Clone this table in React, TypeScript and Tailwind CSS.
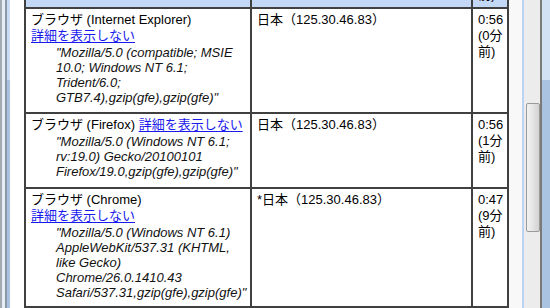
import React from "react";

type Row = {
  browser: string;
  inlineLink: boolean;
  ua: string[];
  place: string;
  time: string[];
  height: string;
};

const ROWS: Row[] = [
  {
    browser: "Internet Explorer",
    inlineLink: false,
    ua: [
      "\"Mozilla/5.0 (compatible; MSIE",
      "10.0; Windows NT 6.1;",
      "Trident/6.0;",
      "GTB7.4),gzip(gfe),gzip(gfe)\"",
    ],
    place: "日本（125.30.46.83）",
    time: ["0:56", "(0分", "前)"],
    height: "h-[105px]",
  },
  {
    browser: "Firefox",
    inlineLink: true,
    ua: [
      "\"Mozilla/5.0 (Windows NT 6.1;",
      "rv:19.0) Gecko/20100101",
      "Firefox/19.0,gzip(gfe),gzip(gfe)\"",
    ],
    place: "日本（125.30.46.83）",
    time: ["0:56", "(1分", "前)"],
    height: "h-[75px]",
  },
  {
    browser: "Chrome",
    inlineLink: false,
    ua: [
      "\"Mozilla/5.0 (Windows NT 6.1)",
      "AppleWebKit/537.31 (KHTML,",
      "like Gecko)",
      "Chrome/26.0.1410.43",
      "Safari/537.31,gzip(gfe),gzip(gfe)\"",
    ],
    place: "*日本（125.30.46.83）",
    time: ["0:47", "(9分", "前)"],
    height: "h-[119px]",
  },
];

const font = {
  fontFamily: '"Liberation Sans", Arial, "Noto Sans CJK JP", sans-serif',
};

const HideLink = () => (
  <a href="#" className="text-[#1a1aee] underline underline-offset-2">
    詳細を表示しない
  </a>
);

export default function App() {
  return (
    <div
      className="w-[550px] h-[308px] overflow-hidden flex bg-white text-[13px] text-black"
      style={font}
    >
      {/* window frame, left */}
      <div className="w-[2px] bg-[#a4aab2]" />
      <div className="w-[3px] bg-[#e6edf6]" />
      <div className="w-[2px] bg-[#8c98a6]" />
      <div className="w-[3px] flex flex-col">
        <div className="h-[80px] bg-[#c8dcf6]" />
        <div className="flex-1 bg-[#a9c2e0]" />
      </div>
      <div className="w-[14px] bg-white" />

      {/* table */}
      <div className="w-[485px] border-l-2 border-[#404040] flex flex-col">
        <div className="flex h-[9px] border-b-2 border-[#404040] bg-[#c3d7f6] overflow-hidden">
          <div className="w-[226px] border-r-2 border-[#404040]" />
          <div className="w-[221px] border-r-2 border-[#404040]" />
          <div className="w-[36px] border-r-2 border-[#404040] pl-[5px] leading-[16px] -mt-[13px]">
            前)
          </div>
        </div>

        {ROWS.map((row, i) => (
          <div
            key={`${row.browser}-${i}`}
            className={`flex shrink-0 border-b-2 border-[#404040] ${row.height}`}
          >
            <div className="w-[226px] border-r-2 border-[#404040] pt-[3px] pl-[5px] whitespace-nowrap">
              <div className="leading-[16px]">
                ブラウザ ({row.browser}){row.inlineLink && " "}
                {row.inlineLink && <HideLink />}
              </div>
              {!row.inlineLink && (
                <div className="leading-[16px]">
                  <HideLink />
                </div>
              )}
              <div className="pl-[25px] pt-px italic text-[#111] leading-[15px]">
                {row.ua.map((line) => (
                  <div key={line}>{line}</div>
                ))}
              </div>
            </div>
            <div className="w-[221px] border-r-2 border-[#404040] pt-[3px] pl-[5px] leading-[16px] whitespace-nowrap">
              {row.place}
            </div>
            <div className="w-[36px] border-r-2 border-[#404040] pt-[3px] pl-[5px] leading-[16px] whitespace-nowrap">
              {row.time.map((t) => (
                <div key={t}>{t}</div>
              ))}
            </div>
          </div>
        ))}
      </div>

      {/* gap before scrollbar */}
      <div className="w-[13px] bg-[#f8f8f8]" />

      {/* scrollbar */}
      <div className="w-[2px] bg-[#bcd4f4]" />
      <div className="w-[16px] bg-[#ececec] pl-[2px] pt-[103px]">
        <div className="w-[14px] h-[129px] rounded-[2px] border border-[#9a9a9a] bg-gradient-to-r from-[#f2f2f2] via-[#e4e4e4] to-[#d2d2d2]" />
      </div>
      <div className="w-[2px] bg-[#7a7a7a]" />
      <div className="flex-1 flex flex-col">
        <div className="h-[80px] bg-[#d2e1f4]" />
        <div className="flex-1 bg-[#a9c3e0]" />
      </div>
    </div>
  );
}
